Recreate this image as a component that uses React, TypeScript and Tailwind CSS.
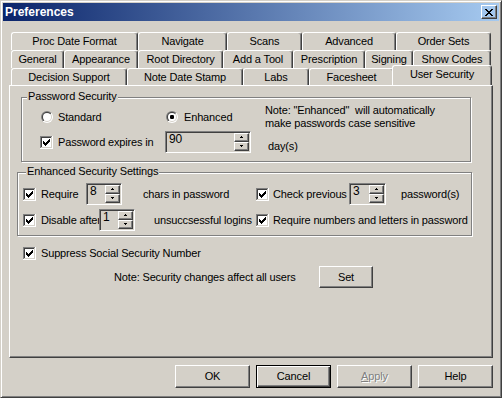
import React from "react";

const raised =
  "border border-t-white border-l-white border-r-[#404040] border-b-[#404040] shadow-[inset_-1px_-1px_0_#808080]";
const sunken =
  "border border-t-[#808080] border-l-[#808080] border-r-white border-b-white shadow-[inset_1px_1px_0_#404040,inset_-1px_-1px_0_#d4d0c8]";

function Checkbox() {
  return (
    <svg width="13" height="13" viewBox="0 0 13 13" shapeRendering="crispEdges" className="shrink-0">
      <rect x="0" y="0" width="13" height="13" fill="#fff" />
      <rect x="0" y="0" width="12" height="1" fill="#808080" />
      <rect x="0" y="0" width="1" height="12" fill="#808080" />
      <rect x="1" y="1" width="10" height="1" fill="#404040" />
      <rect x="1" y="1" width="1" height="10" fill="#404040" />
      <rect x="1" y="11" width="11" height="1" fill="#d4d0c8" />
      <rect x="11" y="1" width="1" height="11" fill="#d4d0c8" />
      <path
        d="M3 5h1v3H3z M4 6h1v3H4z M5 7h1v3H5z M6 6h1v3H6z M7 5h1v3H7z M8 4h1v3H8z M9 3h1v3H9z"
        fill="#000"
      />
    </svg>
  );
}

function Radio({ on }: { on?: boolean }) {
  return (
    <svg width="12" height="12" viewBox="0 0 12 12" className="shrink-0">
      <defs>
        <linearGradient id="rgOuter" x1="0" y1="0" x2="1" y2="1">
          <stop offset="0.5" stopColor="#808080" />
          <stop offset="0.5" stopColor="#ffffff" />
        </linearGradient>
        <linearGradient id="rgInner" x1="0" y1="0" x2="1" y2="1">
          <stop offset="0.5" stopColor="#404040" />
          <stop offset="0.5" stopColor="#d4d0c8" />
        </linearGradient>
      </defs>
      <circle cx="6" cy="6" r="6" fill="url(#rgOuter)" />
      <circle cx="6" cy="6" r="5" fill="url(#rgInner)" />
      <circle cx="6" cy="6" r="4" fill="#fff" />
      {on && <rect x="4" y="4" width="4" height="4" rx="1.2" fill="#000" />}
    </svg>
  );
}

function SpinBtn({ up }: { up?: boolean }) {
  return (
    <div className={`h-[9px] flex items-center justify-center bg-[#d4d0c8] ${raised}`}>
      <svg width="5" height="3" viewBox="0 0 5 3" shapeRendering="crispEdges">
        {up ? (
          <path d="M2 0h1v1H2z M1 1h3v1H1z" fill="#000" />
        ) : (
          <path d="M1 0h3v1H1z M2 1h1v1H2z" fill="#000" />
        )}
      </svg>
    </div>
  );
}

function Spin({ value, className }: { value: string; className: string }) {
  return (
    <div className={`shrink-0 h-[22px] flex bg-[#d4d0c8] ${sunken} ${className}`}>
      <div className="flex-1 pl-[3px] pt-[1px] leading-[13px] text-[12px]">{value}</div>
      <div className="w-[16px] flex flex-col py-[1px] pr-[1px]">
        <SpinBtn up />
        <SpinBtn />
      </div>
    </div>
  );
}

function Group({
  title,
  labelLeft,
  className,
  children,
}: {
  title: string;
  labelLeft: string;
  className: string;
  children: React.ReactNode;
}) {
  return (
    <div
      className={`relative border border-[#808080] shadow-[1px_1px_0_#fff,inset_1px_1px_0_#fff] ${className}`}
    >
      <span className={`absolute -top-[8px] ${labelLeft} bg-[#d4d0c8] px-[1px] leading-[13px]`}>
        {title}
      </span>
      {children}
    </div>
  );
}

function Btn({
  children,
  className,
  def,
}: {
  children: React.ReactNode;
  className: string;
  def?: boolean;
}) {
  return (
    <div
      className={`flex items-center justify-center bg-[#d4d0c8] ${
        def
          ? "border border-black shadow-[inset_1px_1px_0_#fff,inset_-1px_-1px_0_#404040,inset_-2px_-2px_0_#808080]"
          : raised
      } ${className}`}
    >
      {children}
    </div>
  );
}

type T = { label: string; w: string };
const row1: T[] = [
  { label: "Proc Date Format", w: "w-[127px]" },
  { label: "Navigate", w: "w-[89px]" },
  { label: "Scans", w: "w-[75px]" },
  { label: "Advanced", w: "w-[94px]" },
  { label: "Order Sets", w: "w-[95px]" },
];
const row2: T[] = [
  { label: "General", w: "w-[53px]" },
  { label: "Appearance", w: "w-[74px]" },
  { label: "Root Directory", w: "w-[85px]" },
  { label: "Add a Tool", w: "w-[70px]" },
  { label: "Prescription", w: "w-[72px]" },
  { label: "Signing", w: "w-[48px]" },
  { label: "Show Codes", w: "w-[78px]" },
];
const row3: T[] = [
  { label: "Decision Support", w: "w-[116px]" },
  { label: "Note Date Stamp", w: "w-[116px]" },
  { label: "Labs", w: "w-[66px]" },
  { label: "Facesheet", w: "w-[85px]" },
];

const tabCls =
  "shrink-0 flex items-center justify-center whitespace-nowrap bg-[#d4d0c8] border-l border-t border-r border-l-white border-t-white border-r-[#404040] shadow-[inset_-1px_0_0_#808080] rounded-t-[3px]";

function TabRow({ tabs, h, children }: { tabs: T[]; h: string; children?: React.ReactNode }) {
  return (
    <div className={`flex pl-[2px] ${h}`}>
      {tabs.map((t) => (
        <div key={t.label} className={`${tabCls} ${t.w}`}>
          {t.label}
        </div>
      ))}
      {children}
    </div>
  );
}

export default function App() {
  return (
    <div
      className="w-[502px] h-[398px] overflow-hidden bg-[#d4d0c8] font-['Liberation_Sans',Arial,sans-serif] text-[11px] tracking-[-0.15px] text-black border border-t-[#d4d0c8] border-l-[#d4d0c8] border-r-[#404040] border-b-[#404040] shadow-[inset_1px_1px_0_#fff,inset_-1px_-1px_0_#808080] p-[2px] flex flex-col"
    >
      {/* Title bar */}
      <div className="h-[18px] shrink-0 flex items-center justify-between bg-[linear-gradient(to_right,#0a246a,#a6caf0)] pl-[2px] pr-[2px]">
        <span className="text-white font-bold text-[12px] tracking-normal leading-[14px]">Preferences</span>
        <div className={`w-[16px] h-[14px] flex items-center justify-center ${raised}`}>
          <svg width="8" height="7" viewBox="0 0 8 7" shapeRendering="crispEdges">
            <path
              d="M0 0h2v1H0z M6 0h2v1H6z M1 1h2v1H1z M5 1h2v1H5z M2 2h4v1H2z M3 3h2v1H3z M2 4h4v1H2z M1 5h2v1H1z M5 5h2v1H5z M0 6h2v1H0z M6 6h2v1H6z"
              fill="#000"
            />
          </svg>
        </div>
      </div>

      <div className="px-[6px] mt-[11px] flex flex-col">
        <TabRow tabs={row1} h="h-[18px]" />
        <TabRow tabs={row2} h="h-[18px]" />
        <TabRow tabs={row3} h="h-[17px]">
          <div
            className={`${tabCls} relative z-10 w-[100px] h-[20px] -mt-[3px] -ml-[2px] pb-[3px] rounded-t-[3px]`}
          >
            User Security
          </div>
        </TabRow>

        {/* Panel */}
        <div className="h-[273px] border border-l-white border-t-white border-r-[#404040] border-b-[#404040] shadow-[inset_-1px_-1px_0_#808080] flex flex-col">
          <Group title="Password Security" labelLeft="left-[5px]" className="ml-[11px] mt-[11px] w-[450px] h-[65px]">
            <div className="mt-[6px] h-[26px] flex items-center pl-[19px]">
              <div className="w-[125px] flex items-center gap-[5px]">
                <Radio />
                <span>Standard</span>
              </div>
              <div className="w-[99px] flex items-center gap-[6px]">
                <Radio on />
                <span>Enhanced</span>
              </div>
              <div className="leading-[13px]">
                <div>Note: "Enhanced"&nbsp; will automatically</div>
                <div>make passwords case sensitive</div>
              </div>
            </div>
            <div className="mt-[1px] h-[22px] flex items-start pl-[18px]">
              <div className="w-[125px] h-[22px] flex items-center gap-[5px]">
                <Checkbox />
                <span>Password expires in</span>
              </div>
              <Spin value="90" className="w-[86px]" />
              <span className="ml-[17px] mt-[9px] leading-[13px]">day(s)</span>
            </div>
          </Group>

          <Group
            title="Enhanced Security Settings"
            labelLeft="left-[8px]"
            className="ml-[7px] mt-[10px] w-[455px] h-[64px]"
          >
            <div className="mt-[10px] h-[22px] flex items-center pl-[5px]">
              <div className="w-[63px] flex items-center gap-[5px]">
                <Checkbox />
                <span>Require</span>
              </div>
              <Spin value="8" className="w-[36px]" />
              <span className="ml-[21px] w-[113px] whitespace-nowrap">chars in password</span>
              <div className="w-[93px] flex items-center gap-[4px]">
                <Checkbox />
                <span className="whitespace-nowrap">Check previous</span>
              </div>
              <Spin value="3" className="w-[37px]" />
              <span className="ml-[15px]">password(s)</span>
            </div>
            <div className="mt-[4px] h-[22px] flex items-center pl-[5px]">
              <div className="w-[76px] flex items-center gap-[5px]">
                <Checkbox />
                <span className="whitespace-nowrap">Disable after</span>
              </div>
              <Spin value="1" className="w-[36px]" />
              <span className="ml-[19px] w-[102px] whitespace-nowrap">unsuccsessful logins</span>
              <div className="flex items-center gap-[4px]">
                <Checkbox />
                <span className="whitespace-nowrap">Require numbers and letters in password</span>
              </div>
            </div>
          </Group>

          <div className="mt-[11px] ml-[13px] h-[13px] flex items-center gap-[5px]">
            <Checkbox />
            <span>Suppress Social Security Number</span>
          </div>

          <div className="mt-[6px] h-[22px] flex items-center ml-[104px]">
            <span className="w-[205px] whitespace-nowrap">Note: Security changes affect all users</span>
            <Btn className="w-[54px] h-[22px]">Set</Btn>
          </div>
        </div>

        {/* Bottom buttons */}
        <div className="mt-[7px] flex justify-end gap-[6px]">
          <Btn className="w-[75px] h-[23px]">OK</Btn>
          <Btn className="w-[75px] h-[23px]" def>
            Cancel
          </Btn>
          <Btn className="w-[75px] h-[23px]">
            <span className="text-[#808080] [text-shadow:1px_1px_0_#fff]">
              <span className="underline">A</span>pply
            </span>
          </Btn>
          <Btn className="w-[75px] h-[23px]">Help</Btn>
        </div>
      </div>
    </div>
  );
}
